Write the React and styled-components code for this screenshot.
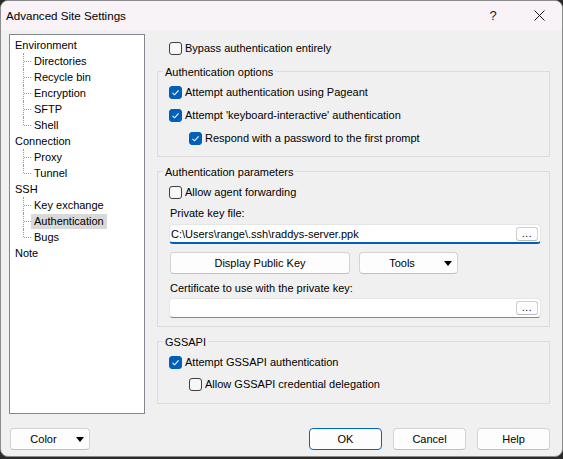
import React from 'react';
import styled, { createGlobalStyle } from 'styled-components';

const Global = createGlobalStyle`
  html, body { margin: 0; padding: 0; background: #2a2a2a; }
  body { font-family: "Segoe UI", "Liberation Sans", Arial, sans-serif; font-size: 11px; color: #000; }
  #root { width: 563px; height: 459px; }
`;

const Window = styled.div`
  box-sizing: border-box;
  width: 563px;
  height: 457px;
  background: #f0f0f0;
  border: 1px solid #8c8c8c;
  border-radius: 8px;
  overflow: hidden;
  display: flex;
  flex-direction: column;
`;

const TitleBar = styled.div`
  height: 29px;
  flex: none;
  display: flex;
  align-items: center;
  background: #f9f2f6;
`;

const Title = styled.div`
  flex: 1;
  padding-left: 5px;
  font-size: 11.6px;
  color: #000;
`;

const CaptionButton = styled.div`
  width: 46px;
  height: 29px;
  display: flex;
  align-items: center;
  justify-content: center;
  font-size: 13px;
  color: #1a1a1a;
`;

const Body = styled.div`
  display: flex;
  gap: 12px;
  padding: 4px 12px 0 8px;
`;

const Tree = styled.div`
  box-sizing: border-box;
  width: 136px;
  height: 380px;
  flex: none;
  background: #fff;
  border: 1px solid #828790;
  padding: 2px 0 0 5px;
`;

const RootNode = styled.div`
  height: 16px;
  line-height: 16px;
  white-space: nowrap;
`;

const Children = styled.div`
  margin-left: 8px;
`;

const ChildNode = styled.div`
  position: relative;
  height: 16px;
  padding-left: 8px;
  display: flex;
  align-items: center;
  &::before {
    content: "";
    position: absolute;
    left: 0;
    top: 0;
    height: ${p => (p.$last ? '8px' : '16px')};
    border-left: 1px dotted #9a9a9a;
  }
  &::after {
    content: "";
    position: absolute;
    left: 1px;
    top: 8px;
    width: 7px;
    border-top: 1px dotted #9a9a9a;
  }
`;

const NodeLabel = styled.span`
  height: 15px;
  line-height: 15px;
  padding: 0 3px;
  white-space: nowrap;
  background: ${p => (p.$selected ? '#d9d9d9' : 'transparent')};
`;

const Panel = styled.div`
  flex: 1;
  display: flex;
  flex-direction: column;
  padding-top: 6px;
`;

const Row = styled.div`
  height: 16px;
  display: flex;
  align-items: center;
  gap: 3px;
  white-space: nowrap;
  margin-top: ${p => p.$mt || 0}px;
  margin-left: ${p => p.$indent || 0}px;
`;

const Box = styled.span`
  box-sizing: border-box;
  width: 13px;
  height: 13px;
  flex: none;
  border-radius: 3px;
  display: flex;
  align-items: center;
  justify-content: center;
  background: ${p => (p.$checked ? '#005fb8' : '#f7f7f7')};
  border: 1px solid ${p => (p.$checked ? '#005fb8' : '#3f3f3f')};
`;

const Group = styled.div`
  position: relative;
  display: flex;
  flex-direction: column;
  border: 1px solid #dcdcdc;
  margin-top: ${p => p.$mt}px;
  padding: 12px 8px ${p => p.$pb}px 11px;
`;

const GroupCaption = styled.span`
  position: absolute;
  top: -7px;
  left: 5px;
  padding: 0 2px;
  line-height: 14px;
  background: #f0f0f0;
  white-space: nowrap;
`;

const Label = styled.div`
  height: 16px;
  line-height: 16px;
  margin-top: ${p => p.$mt || 0}px;
  padding-left: 1px;
`;

const Field = styled.div`
  box-sizing: border-box;
  height: 20px;
  margin-top: ${p => p.$mt || 0}px;
  display: flex;
  align-items: center;
  background: #fff;
  border: 1px solid #e6e6e6;
  border-bottom: ${p => (p.$focused ? '2px solid #005fb8' : '1px solid #868686')};
  border-radius: 4px;
  padding: 0 2px 0 1px;
`;

const FieldText = styled.span`
  flex: 1;
  white-space: nowrap;
  overflow: hidden;
`;

const BrowseButton = styled.span`
  box-sizing: border-box;
  width: 22px;
  height: 14px;
  flex: none;
  display: flex;
  align-items: center;
  justify-content: center;
  border: 1px solid #cfcfcf;
  border-bottom-color: #b8b8b8;
  border-radius: 3px;
  background: #fdfdfd;
  font-size: 10px;
  line-height: 10px;
  letter-spacing: 0.5px;
`;

const ButtonRow = styled.div`
  display: flex;
  gap: 9px;
  margin-top: 8px;
  padding-left: 1px;
`;

const Button = styled.div`
  box-sizing: border-box;
  width: ${p => p.$w}px;
  height: 22px;
  flex: none;
  display: flex;
  align-items: center;
  justify-content: center;
  background: #fdfdfd;
  border: 1px solid ${p => (p.$default ? '#0067c0' : '#d3d3d3')};
  border-bottom-color: ${p => (p.$default ? '#0067c0' : '#c0c0c0')};
  border-radius: 4px;
  white-space: nowrap;
`;

const DropButton = styled(Button)`
  justify-content: flex-start;
  padding-right: 5px;
`;

const DropLabel = styled.span`
  flex: 1;
  text-align: center;
`;

const Footer = styled.div`
  display: flex;
  align-items: center;
  padding: 14px 12px 0 9px;
  gap: 11px;
`;

const Spacer = styled.div`
  flex: 1;
`;

const Check = ({ checked }) => (
  <Box $checked={checked}>
    {checked && (
      <svg width="9" height="9" viewBox="0 0 9 9">
        <polyline points="1.5,4.8 3.6,6.8 7.6,2.4" fill="none" stroke="#fff" strokeWidth="1.1" />
      </svg>
    )}
  </Box>
);

const CheckRow = ({ checked, children, mt, indent }) => (
  <Row $mt={mt} $indent={indent}>
    <Check checked={checked} />
    <span>{children}</span>
  </Row>
);

const Triangle = () => (
  <svg width="8" height="5" viewBox="0 0 8 5">
    <polygon points="0,0 8,0 4,5" fill="#000" />
  </svg>
);

const tree = [
  { name: 'Environment', children: ['Directories', 'Recycle bin', 'Encryption', 'SFTP', 'Shell'] },
  { name: 'Connection', children: ['Proxy', 'Tunnel'] },
  { name: 'SSH', children: ['Key exchange', 'Authentication', 'Bugs'] },
  { name: 'Note', children: [] },
];

export default function App() {
  return (
    <>
      <Global />
      <Window>
        <TitleBar>
          <Title>Advanced Site Settings</Title>
          <CaptionButton>?</CaptionButton>
          <CaptionButton>
            <svg width="11" height="11" viewBox="0 0 11 11">
              <path d="M0.5 0.5 L10.5 10.5 M10.5 0.5 L0.5 10.5" stroke="#1a1a1a" strokeWidth="1" />
            </svg>
          </CaptionButton>
        </TitleBar>
        <Body>
          <Tree>
            {tree.map(node => (
              <div key={node.name}>
                <RootNode>{node.name}</RootNode>
                {node.children.length > 0 && (
                  <Children>
                    {node.children.map((c, i) => (
                      <ChildNode key={c} $last={i === node.children.length - 1}>
                        <NodeLabel $selected={c === 'Authentication'}>{c}</NodeLabel>
                      </ChildNode>
                    ))}
                  </Children>
                )}
              </div>
            ))}
          </Tree>
          <Panel>
            <Row $indent={12}>
              <Check checked={false} />
              <span>Bypass authentication entirely</span>
            </Row>
            <Group $mt={15} $pb={10}>
              <GroupCaption>Authentication options</GroupCaption>
              <CheckRow checked>Attempt authentication using Pageant</CheckRow>
              <CheckRow checked mt={7}>Attempt 'keyboard-interactive' authentication</CheckRow>
              <CheckRow checked mt={7} indent={20}>Respond with a password to the first prompt</CheckRow>
            </Group>
            <Group $mt={14} $pb={8}>
              <GroupCaption>Authentication parameters</GroupCaption>
              <CheckRow checked={false}>Allow agent forwarding</CheckRow>
              <Label $mt={5}>Private key file:</Label>
              <Field $mt={3} $focused>
                <FieldText>C:\Users\range\.ssh\raddys-server.ppk</FieldText>
                <BrowseButton>...</BrowseButton>
              </Field>
              <ButtonRow>
                <Button $w={180}>Display Public Key</Button>
                <DropButton $w={99}>
                  <DropLabel>Tools</DropLabel>
                  <Triangle />
                </DropButton>
              </ButtonRow>
              <Label $mt={6}>Certificate to use with the private key:</Label>
              <Field $mt={2}>
                <FieldText />
                <BrowseButton>...</BrowseButton>
              </Field>
            </Group>
            <Group $mt={14} $pb={11}>
              <GroupCaption>GSSAPI</GroupCaption>
              <CheckRow checked>Attempt GSSAPI authentication</CheckRow>
              <CheckRow checked={false} mt={6} indent={20}>Allow GSSAPI credential delegation</CheckRow>
            </Group>
          </Panel>
        </Body>
        <Footer>
          <DropButton $w={80}>
            <DropLabel>Color</DropLabel>
            <Triangle />
          </DropButton>
          <Spacer />
          <Button $w={73} $default>OK</Button>
          <Button $w={73}>Cancel</Button>
          <Button $w={73}>Help</Button>
        </Footer>
      </Window>
    </>
  );
}
